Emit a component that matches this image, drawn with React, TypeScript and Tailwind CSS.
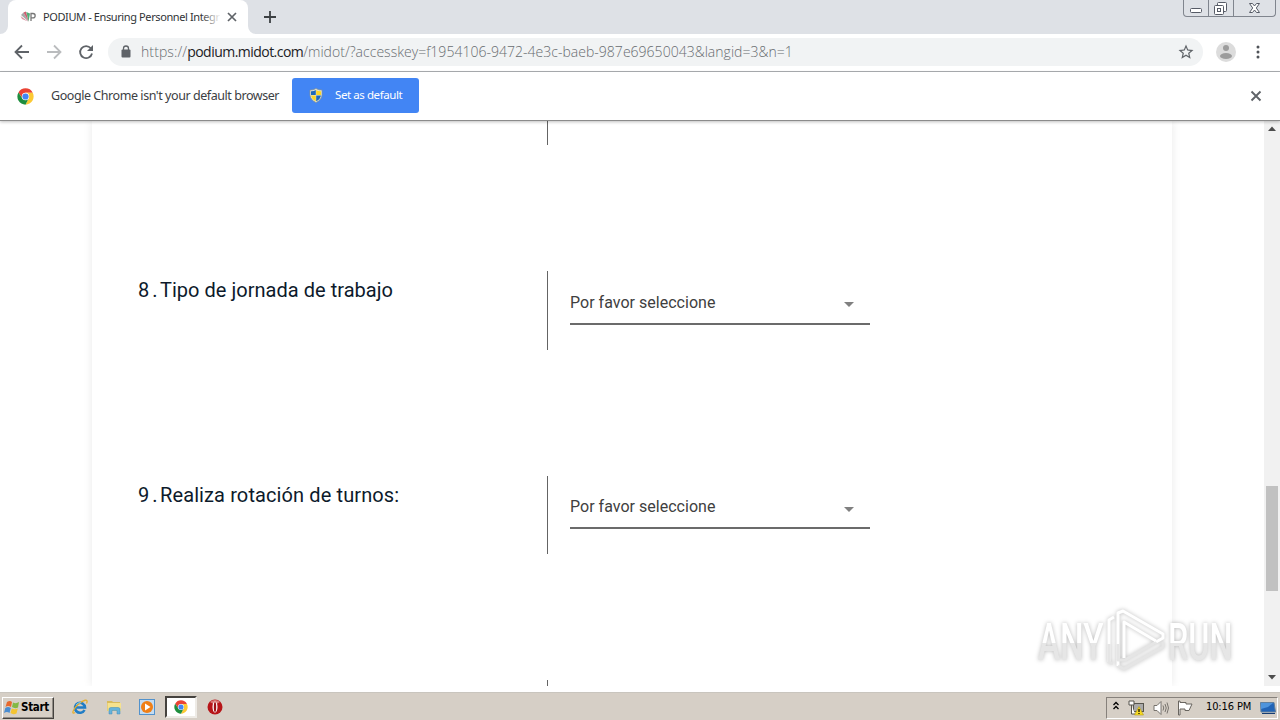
import { twMerge } from "tailwind-merge";
import { ReactNode } from "react";

interface IQuestion {
    id: number;
    title: string;
    titleClass: string;
    rowClass: string;
    selectClass: string;
    arrowClass: string;
}

const questions: IQuestion[] = [
    {
        id: 8,
        title: "Tipo de jornada de trabajo",
        titleClass: "tracking-[0.03px]",
        rowClass: "mt-[126px] h-[79px]",
        selectClass: "mt-[19px] h-[35px]",
        arrowClass: "mt-[12px]",
    },
    {
        id: 9,
        title: "Realiza rotación de turnos:",
        titleClass: "tracking-[0.11px]",
        rowClass: "mt-[126px] h-[78px]",
        selectClass: "mt-[18px] h-[35px]",
        arrowClass: "mt-[13px]",
    },
]

function ChromeLogo ({className}:{className?:string}) {
    return (
        <svg viewBox="0 0 48 48" className={className}>
            <path d="M24 13.5 H44.4 A23 23 0 0 0 24 1 A23 23 0 0 0 4.1 12.5 L14.9 29.2 Z" fill="#ea4335" />
            <path d="M24 13.5 H44.4 A23 23 0 0 1 24 47 L33.1 29.2 Z" fill="#fcc934" />
            <path d="M14.9 29.2 L4.1 12.5 A23 23 0 0 0 24 47 L33.1 29.2 Z" fill="#1e8e3e" />
            <circle cx="24" cy="24" r="10.5" fill="#fff" />
            <circle cx="24" cy="24" r="8.8" fill="#4285f4" />
        </svg>
    )
}

function TabStrip () {
    return (
        <div className="w-full h-[34px] bg-[#dee1e6] flex justify-between items-start">
            <div className="flex h-full">
                <svg viewBox="0 0 8 34" className="w-2 h-[34px]">
                    <path d="M8 26 A8 8 0 0 1 0 34 H8 Z" fill="#fff" />
                </svg>
                <div className="w-[240px] h-full bg-white rounded-t-lg flex items-center">
                    <svg viewBox="0 0 16 16" className="w-4 h-4 ml-3 shrink-0">
                        <path d="M1 6 L3.5 3.5 L8.500 12.500 Z" fill="#a7a7a7" />
                        <path d="M3.500 3.500 L6 2.500 L8.500 12.500 Z" fill="#d05c70" />
                        <path d="M6.300 3 L10 4.500 L8.500 12.500 Z" fill="#4fae78" />
                        <path d="M0.500 7 L2 10 L8 12.500 Z" fill="#dc91a2" />
                        <path d="M11 12 V4.500 H13 A2 2 0 0 1 13 8.800 H11" fill="none" stroke="#777" strokeWidth="1.300" />
                    </svg>
                    <div className="relative ml-[7px] w-[178px] overflow-hidden whitespace-nowrap text-[11px] leading-4 text-[#303336] font-['Noto_Sans',sans-serif] tracking-[-0.390px]">
                        PODIUM - Ensuring Personnel Integr
                        <div className="absolute right-0 top-0 w-5 h-full bg-linear-to-r from-transparent to-white"></div>
                    </div>
                    <svg viewBox="0 0 10 10" className="w-[10px] h-[10px] ml-[6px]">
                        <path d="M1 1 L9 9 M9 1 L1 9" stroke="#5f6368" strokeWidth="1.700" />
                    </svg>
                </div>
                <svg viewBox="0 0 8 34" className="w-2 h-[34px]">
                    <path d="M0 26 A8 8 0 0 0 8 34 H0 Z" fill="#fff" />
                </svg>
                <svg viewBox="0 0 12 12" className="w-3 h-3 ml-2 mt-[11px]">
                    <path d="M6 0 V12 M0 6 H12" stroke="#3c4043" strokeWidth="1.800" />
                </svg>
            </div>
            <WindowButtons />
        </div>
    )
}

function WindowButtons () {
    return (
        <div className="w-[93px] h-[17px] mr-1 flex border border-t-0 border-[#80858e] rounded-b-[4px]">
            <div className="w-[25px] border-r border-[#80858e]">
                <svg viewBox="0 0 24 16" className="w-6 h-4">
                    <rect x="6.500" y="8.500" width="11" height="4" rx="1" fill="#fff" stroke="#565b66" />
                </svg>
            </div>
            <div className="w-[25px] border-r border-[#80858e]">
                <svg viewBox="0 0 24 16" className="w-6 h-4" fill="#fff" stroke="#565b66">
                    <rect x="8.500" y="2.500" width="9" height="9" rx="1" />
                    <rect x="5.500" y="5.500" width="9" height="9" rx="1" />
                    <rect x="8.500" y="8.500" width="3" height="3" />
                </svg>
            </div>
            <svg viewBox="0 0 41 16" className="w-[41px] h-4">
                <path d="M15.500 3.500 h3 l2 2.500 l2 -2.500 h3 l-3.200 4.500 l3.200 4.500 h-3 l-2 -2.500 l-2 2.500 h-3 l3.200 -4.500 Z" fill="#fff" stroke="#565b66" />
            </svg>
        </div>
    )
}

function Toolbar () {
    return (
        <div className="w-full h-[38px] bg-white border-b border-[#adb0b3] flex items-center">
            <svg viewBox="0 0 90 20" className="w-[90px] h-5 ml-2 mb-px shrink-0" fill="none" strokeWidth="1.800">
                <path d="M21 10 H8 M14 3.500 L7.500 10 L14 16.500" stroke="#5f6368" />
                <path d="M39 10 H52 M46 3.500 L52.500 10 L46 16.500" stroke="#babcbe" />
                <path d="M82.800 6.300 A6 6 0 1 0 84 11.500" stroke="#5f6368" />
                <path d="M85 3 V9 H79 Z" fill="#5f6368" />
            </svg>
            <div className="ml-[10px] mb-px w-[1095px] h-7 rounded-full bg-[#f1f3f4] flex items-center">
                <svg viewBox="0 0 10 13" className="w-[10px] h-[13px] ml-[13px] mb-px shrink-0">
                    <rect x="0.500" y="4.500" width="9" height="8" rx="1" fill="#5f6368" />
                    <path d="M2.500 5 V3.500 A2.500 2.500 0 0 1 7.500 3.500 V5" fill="none" stroke="#5f6368" strokeWidth="1.300" />
                </svg>
                <p className="ml-[10px] whitespace-nowrap text-[14px] leading-5 text-[#686c70] font-['Open_Sans','Noto_Sans',sans-serif] font-light">
                    <span className="tracking-[0.1px]">https://</span>
                    <span className="tracking-[-0.530px] text-[#202124] font-normal">podium.midot.com</span>
                    <span className="tracking-[0.020px]">/midot/?accesskey=f1954106-9472-4e3c-baeb-987e69650043&amp;langid=3&amp;n=1</span>
                </p>
                <svg viewBox="0 0 24 24" className="w-[18px] h-[18px] ml-auto mr-2 shrink-0" fill="#5f6368">
                    <path d="M22 9.240l-7.190-.62L12 2 9.190 8.630 2 9.240l5.460 4.730L5.820 21 12 17.270 18.180 21l-1.630-7.030L22 9.240zM12 15.400l-3.760 2.270 1-4.280-3.320-2.880 4.380-.38L12 6.100l1.710 4.040 4.380.38-3.320 2.880 1 4.280L12 15.400z" />
                </svg>
            </div>
            <svg viewBox="0 0 20 20" className="w-5 h-5 ml-[13px] mb-px">
                <circle cx="10" cy="10" r="10" fill="#dcdcdc" />
                <circle cx="10" cy="6" r="3" fill="#9c9c9c" />
                <ellipse cx="10" cy="14" rx="6" ry="3" fill="#9c9c9c" />
            </svg>
            <svg viewBox="0 0 4 16" className="w-1 h-4 ml-[20px] mb-px" fill="#4f5358">
                <circle cx="2" cy="3" r="1.500" />
                <circle cx="2" cy="8" r="1.500" />
                <circle cx="2" cy="13" r="1.500" />
            </svg>
        </div>
    )
}

function InfoBar () {
    return (
        <div className="relative z-10 w-full h-[49px] bg-white border-b border-[#8b8b8b] shadow-[0_1px_3px_rgba(0,0,0,0.25)] flex items-center font-['Noto_Sans',sans-serif]">
            <ChromeLogo className="w-[17px] h-[17px] ml-[17px]" />
            <p className="ml-[17px] w-[241px] whitespace-nowrap text-[12.500px] text-[#3c4043] tracking-[-0.440px]">Google Chrome isn't your default browser</p>
            <button className="w-[127px] h-[35px] mb-[2px] rounded-[3px] bg-[#4285f4] flex items-center text-white">
                <svg viewBox="0 0 14 15" className="w-[14px] h-[15px] ml-[17px]">
                    <path d="M7 0.500 Q10 2.500 13 2 V7 Q12.500 12 7 14.500 Q1.500 12 1 7 V2 Q4 2.500 7 0.500 Z" fill="#e4e8df" stroke="#8c9388" strokeWidth="0.700" />
                    <path d="M6.800 2 V7 H2 V3.300 Q4.500 3.500 6.800 2 Z M7.200 7.400 H12 Q11.200 11.400 7.200 13.300 Z" fill="#1e69ba" />
                    <path d="M7.200 2 V7 H12 V3.300 Q9.500 3.500 7.200 2 Z M6.800 7.400 H2 Q2.800 11.400 6.800 13.300 Z" fill="#fbd627" />
                </svg>
                <span className="ml-[12px] whitespace-nowrap text-[11.500px] tracking-[-0.420px]">Set as default</span>
            </button>
            <svg viewBox="0 0 12 12" className="w-3 h-3 ml-auto mr-[18px]">
                <path d="M1.500 1.500 L10.500 10.500 M10.500 1.500 L1.500 10.500" stroke="#5f6368" strokeWidth="1.900" />
            </svg>
        </div>
    )
}

function QuestionRow ({data}:{data:IQuestion}) {
    return (
        <div className={twMerge(["w-full flex items-start", data.rowClass])}>
            <div className="w-[409px] flex gap-1 whitespace-nowrap text-[20px] leading-6 text-[#0d1a2b] pt-[7px]">
                <span className="w-[18px] tracking-[3px]">{data.id}.</span>
                <span className={data.titleClass}>{data.title}</span>
            </div>
            <div className="h-full border-l border-[#646464]"></div>
            <div className={twMerge(["w-[300px] ml-[22px] flex justify-between items-start border-b-2 border-[#6b6b6b]", data.selectClass])}>
                <p className="mt-px whitespace-nowrap text-[16px] leading-6 text-[#404040] tracking-[0.020px]">Por favor seleccione</p>
                <svg viewBox="0 0 10 5" className={twMerge(["w-[10px] h-[5px] mr-4", data.arrowClass])}>
                    <path d="M0 0 H10 L5 5 Z" fill="#808080" />
                </svg>
            </div>
        </div>
    )
}

function ScrollBar () {
    return (
        <div className="w-4 h-full bg-[#f1f1f1] flex flex-col items-center">
            <svg viewBox="0 0 8 5" className="w-2 h-[5px] mt-[5px]">
                <path d="M0 5 L4 0.500 L8 5 Z" fill="#4c4c4c" />
            </svg>
            <div className="w-3 h-[105px] mt-[355px] bg-[#c1c1c1]"></div>
            <svg viewBox="0 0 8 5" className="w-2 h-[5px] mt-auto mb-[6px]">
                <path d="M0 0 L4 4.500 L8 0 Z" fill="#4c4c4c" />
            </svg>
        </div>
    )
}

function Watermark () {
    return (
        <div className="absolute left-[1036px] top-[608px] w-[200px] h-[66px] flex items-center drop-shadow-[0_0_2px_rgba(0,0,0,0.28)] font-[Roboto,sans-serif] text-[52px] leading-[66px] pointer-events-none">
            <div className="w-[70px] shrink-0 pt-1">
                <span className="inline-block origin-left scale-x-[0.640] ml-[2px] bg-linear-to-b from-white from-50% to-[#e6e6e6] to-50% bg-clip-text text-transparent font-medium">ANY</span>
            </div>
            <svg viewBox="0 0 60 66" className="w-[60px] h-[66px] shrink-0" fill="none" strokeLinejoin="round">
                <path d="M3 54 V12 L8 9 M12 58 V5 L17 3 L57 26 V30 L50 34" stroke="#fff" strokeWidth="3" />
                <path d="M3 36 V54 L7 56 M12 36 V52 L19 52 L50 34 M57 34 V39 L18 61 L12 58" stroke="#e5e5e5" strokeWidth="3" />
                <path d="M18 50 V14 L50 33" stroke="#fff" strokeWidth="3" />
            </svg>
            <div className="w-[70px] shrink-0 pt-1">
                <span className="inline-block origin-left scale-x-[0.620] ml-[2px] bg-linear-to-b from-white from-50% to-[#e6e6e6] to-50% bg-clip-text text-transparent font-medium">RUN</span>
            </div>
        </div>
    )
}

function TaskButton ({children, active}:{children:ReactNode, active?:boolean}) {
    return (
        <div className={twMerge([
            "w-[32px] h-[22px] flex justify-center items-center",
            active && "bg-white border-2 border-t-[#45423e] border-l-[#45423e] border-r-[#eeebe6] border-b-[#eeebe6]",
        ])}>
            {children}
        </div>
    )
}

function TaskBar () {
    return (
        <div className="w-full h-[28px] bg-[#d6cfc6] border-t border-[#c9c5be] flex items-center justify-between">
            <div className="flex items-center">
                <div className="ml-[2px] w-[52px] h-[22px] mt-[2px] flex items-center bg-[#d6cfc6] border border-t-white border-l-white border-r-[#45423e] border-b-[#45423e] shadow-[inset_-1px_-1px_0_#928d86]">
                    <svg viewBox="0 0 16 15" className="w-4 h-[15px] ml-px">
                        <path d="M3 2 Q6 0 8 2 L7 7 Q4 5 1.500 7 Z" fill="#e7692d" />
                        <path d="M9 2.500 Q12 4 15 2 L14 7.500 Q11 9 8 7 Z" fill="#83b944" />
                        <path d="M1.300 8 Q4 6 6.800 8 L5.500 13 Q3 11 0 13 Z" fill="#4a8dd1" />
                        <path d="M7.800 8.500 Q11 10 13.800 8.500 L12.500 13.500 Q9 15 6.500 13 Z" fill="#f4c431" />
                    </svg>
                    <b className="ml-px text-[11.500px] text-black font-['DejaVu_Sans_Condensed','DejaVu_Sans',sans-serif] tracking-[-0.300px]">Start</b>
                </div>
                <div className="flex items-center ml-[10px] gap-[1.700px]">
                    <TaskButton>
                        <svg viewBox="0 0 16 16" className="w-4 h-4" fill="none">
                            <path d="M12.500 11 A5 5 0 1 1 13 8.500 H4" stroke="#217dc5" strokeWidth="2.600" />
                            <path d="M3 13.500 C-1 16 1 10 6 5.500 C11 1 17 -1 14.500 4.500" stroke="#e5ae2c" strokeWidth="1.300" />
                            <path d="M4 6 A5 4 0 0 1 9 3.500" stroke="#74c3ec" />
                        </svg>
                    </TaskButton>
                    <TaskButton>
                        <svg viewBox="0 0 16 16" className="w-4 h-4">
                            <path d="M1 2 H6 L7 3 H14 V12 H1 Z" fill="#d9bb5c" />
                            <path d="M1.500 4 H15 V12 H1.500 Z" fill="#f6e28e" />
                            <path d="M3 15 V10 Q3 8.500 5 8.500 H12 Q14 8.500 14 10 V15 H11 V11.500 H6 V15 Z" fill="#66b3db" stroke="#418bb5" strokeWidth="0.500" />
                        </svg>
                    </TaskButton>
                    <TaskButton>
                        <svg viewBox="0 0 16 16" className="w-4 h-4">
                            <rect x="0.500" y="0.500" width="15" height="15" fill="#c4dcf1" stroke="#5292cc" />
                            <circle cx="8" cy="8" r="6" fill="#f07f16" />
                            <path d="M6 4.500 L11.500 8 L6 11.500 Z" fill="#fff" />
                        </svg>
                    </TaskButton>
                    <TaskButton active>
                        <ChromeLogo className="w-[14px] h-[14px]" />
                    </TaskButton>
                    <TaskButton>
                        <svg viewBox="0 0 16 16" className="w-4 h-4">
                            <circle cx="8" cy="8" r="7.500" fill="#b71518" />
                            <path d="M3 3 A7.500 7.500 0 0 1 13 3 L8 6 Z" fill="#d97975" />
                            <ellipse cx="8" cy="8" rx="2.500" ry="5.500" fill="#fff" />
                            <ellipse cx="8" cy="8" rx="1.200" ry="5" fill="#9d1114" />
                        </svg>
                    </TaskButton>
                </div>
            </div>
            <div className="w-[172px] h-[22px] mr-[2px] mt-[2px] flex items-center border border-t-[#86817b] border-l-[#86817b] border-r-white border-b-white">
                <svg viewBox="0 0 8 10" className="w-2 h-[10px] ml-[5px] mb-[3px]" fill="none" stroke="#000" strokeWidth="1.300">
                    <path d="M1.500 4 L4 1.500 L6.500 4 M1.500 8 L4 5.500 L6.500 8" />
                </svg>
                <svg viewBox="0 0 16 16" className="w-4 h-4 ml-[8px]">
                    <rect x="5.500" y="3.500" width="10" height="8" fill="#aaa" stroke="#57554e" />
                    <path d="M1 1 H6 V5 H1 Z M3.500 5 V14 H7" fill="#fff" stroke="#57554e" />
                    <path d="M11 6.500 L15.500 15 H6.500 Z" fill="#f7da23" stroke="#b49a17" strokeWidth="0.600" />
                    <path d="M11 9 V12 M11 13 V14" stroke="#000" strokeWidth="1.200" />
                </svg>
                <svg viewBox="0 0 16 16" className="w-4 h-4 ml-[9px]" fill="none" stroke="#77736d">
                    <path d="M1 5.500 H4 L8 1.500 V14.500 L4 10.500 H1 Z" fill="#fff" />
                    <path d="M10 5.500 Q11.500 8 10 10.500 M12 4 Q14.500 8 12 12 M14 2.500 Q17 8 14 13.500" />
                </svg>
                <svg viewBox="0 0 16 16" className="w-4 h-4 ml-[8px]">
                    <path d="M1.500 1 V15 H3 V9 H8 V10.500 H12 L15 4 H9 V2.500 H3 V1 Z" fill="#fff" stroke="#69655f" />
                </svg>
                <span className="ml-[13px] w-[46px] whitespace-nowrap text-[11px] text-black font-['DejaVu_Sans_Condensed','DejaVu_Sans',sans-serif] tracking-[-0.130px]">10:16 PM</span>
                <svg viewBox="0 0 16 14" className="w-4 h-[14px] ml-[8px]">
                    <path d="M0.500 1.500 H14 L15.500 11 H1 Z" fill="#2264b6" stroke="#60809f" />
                    <path d="M1 2 H13 L8 6 L1 8 Z" fill="#4e94dc" />
                    <path d="M2 12.500 H15" stroke="#163d72" />
                </svg>
            </div>
        </div>
    )
}

export default function App () {
    return (
        <div className="w-[1280px] h-[720px] relative overflow-hidden bg-white flex flex-col">
            <TabStrip />
            <Toolbar />
            <InfoBar />
            <div className="w-full h-[565px] flex overflow-hidden font-[Roboto,sans-serif]">
                <div className="w-[1264px] h-full flex">
                    <div className="ml-[92px] w-[1080px] h-full pl-[46px] shadow-[0_0_9px_rgba(0,0,0,0.09)]">
                        <div className="ml-[409px] h-6 border-l border-[#646464]"></div>
                        {questions.map((q:IQuestion)=>
                            <QuestionRow key={q.id} data={q} />
                        )}
                        <div className="ml-[409px] mt-[126px] h-[78px] border-l border-[#646464]"></div>
                    </div>
                </div>
                <ScrollBar />
            </div>
            <div className="w-full h-[6px] bg-white"></div>
            <TaskBar />
            <Watermark />
        </div>
    )
}
